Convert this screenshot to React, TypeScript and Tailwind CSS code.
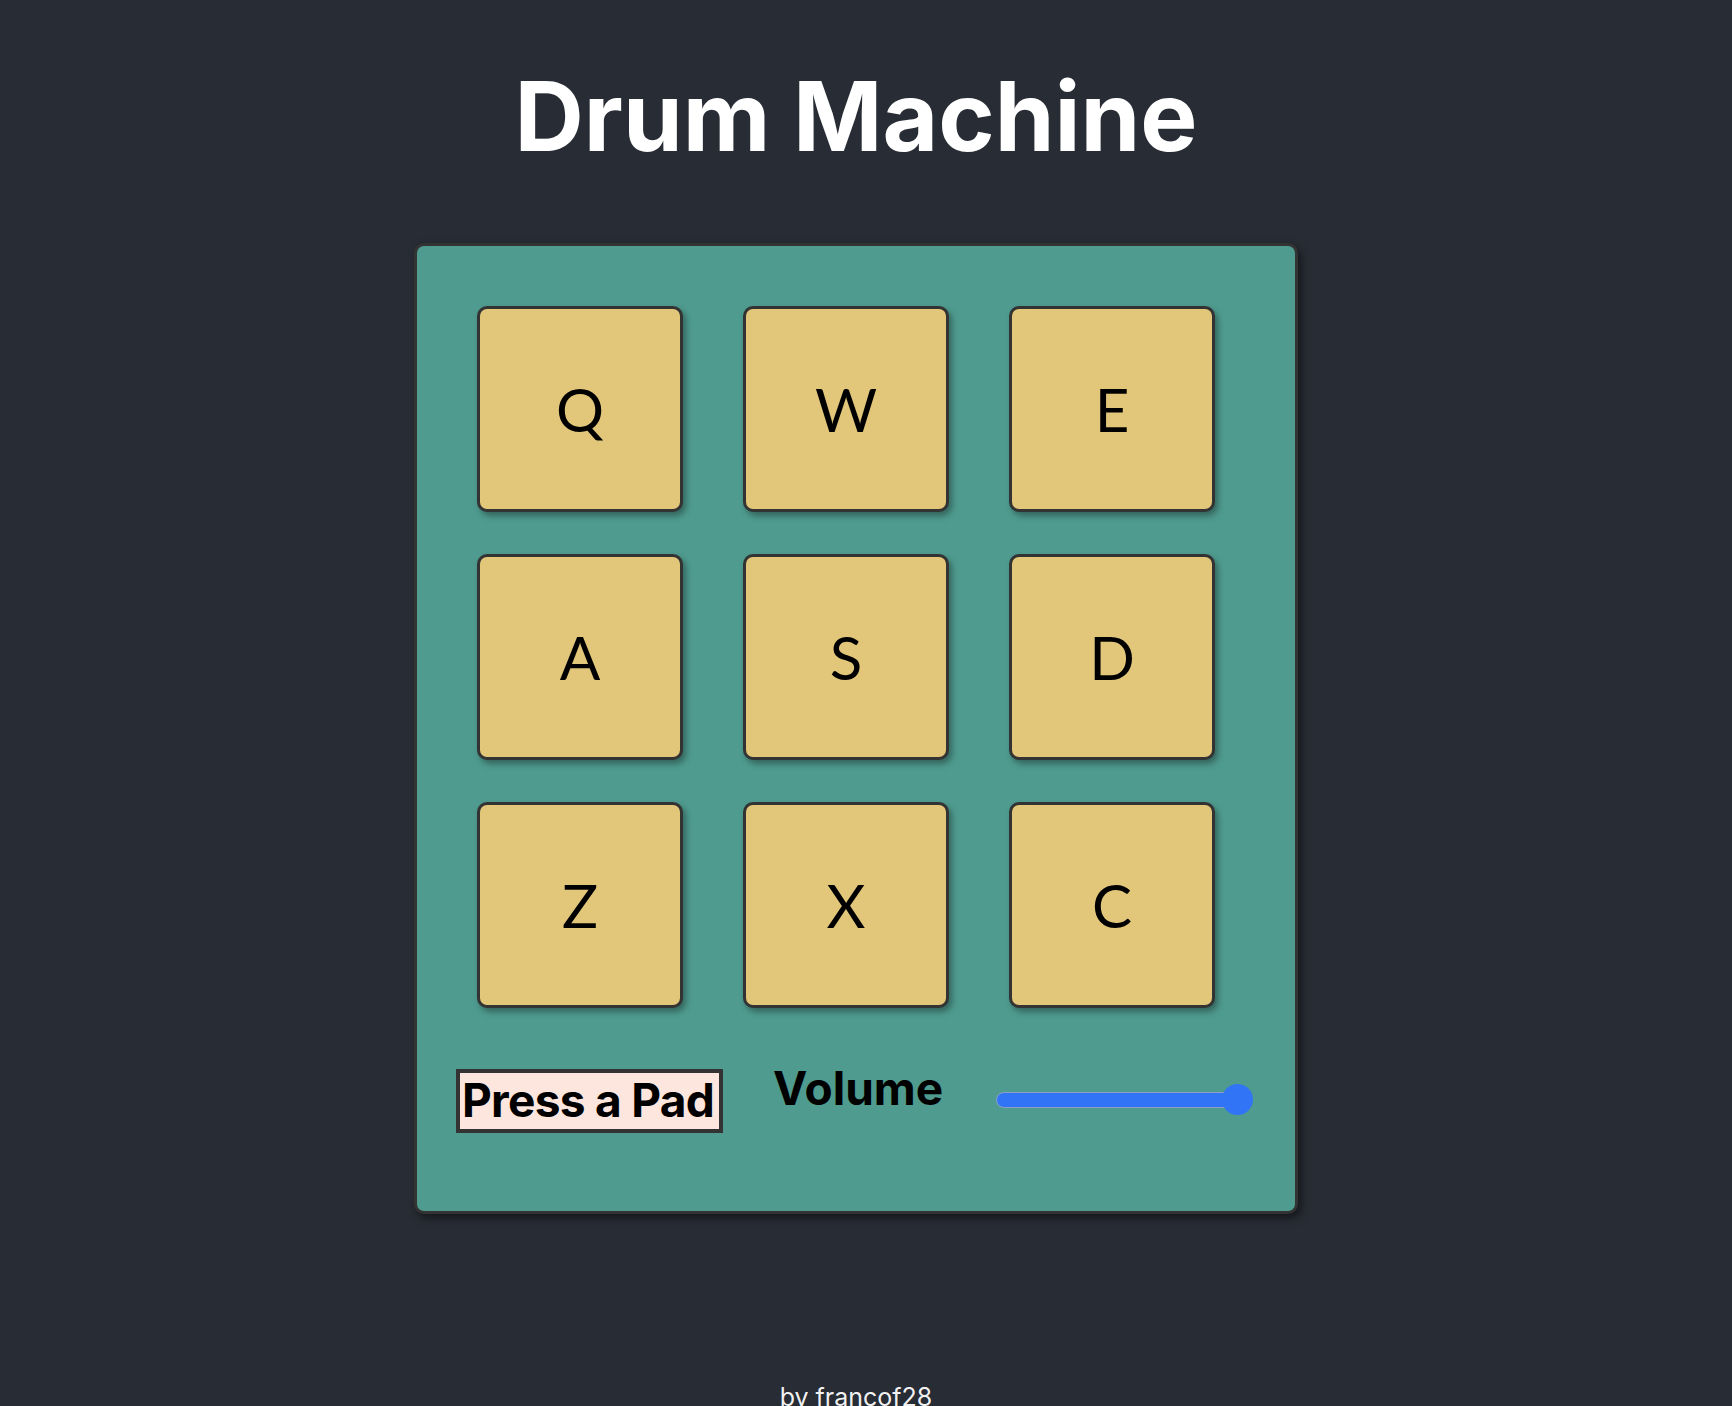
const pads = ['Q', 'W', 'E', 'A', 'S', 'D', 'Z', 'X', 'C']

function Pad({ k }: { k: string }) {
  return (
    <div className="w-[206px] h-[206px] flex items-center justify-center rounded-[10px] border-[3px] border-[#333333] bg-[#e2c67a] shadow-[3px_4px_6px_rgba(0,0,0,0.35)] text-[60px] text-black font-['Lato',sans-serif] leading-none">
      {k}
    </div>
  )
}

export default function App() {
  return (
    <div className="min-h-screen bg-[#282c34] flex flex-col items-center pt-[68px] pr-[20px] font-['Inter',sans-serif]">
      <h1 className="text-8xl leading-none font-bold tracking-normal text-white">Drum Machine</h1>

      <div className="mt-[79px] w-[884px] h-[971px] rounded-[10px] border-[3px] border-[#333333] bg-[#4f9b8f] shadow-[3px_4px_8px_rgba(0,0,0,0.5)] pt-[60px] px-[60px]">
        <div className="grid grid-cols-[repeat(3,206px)] gap-x-[60px] gap-y-[42px]">
          {pads.map(k => <Pad key={k} k={k} />)}
        </div>

        <div className="mt-[61px] -ml-[21px] -mr-[40px] flex items-start">
          <div className="shrink-0 w-[267px] h-[64px] border-[4px] border-[#333333] bg-[#fce6dd] pl-[2px] pt-[5px] text-[46px] leading-[44px] tracking-[-0.015em] font-bold text-black whitespace-nowrap">
            Press a Pad
          </div>
          <div className="shrink-0 ml-[50px] -mt-[6px] text-[46px] leading-none font-bold text-black py-[2px]">Volume</div>
          <div className="shrink-0 ml-[53px] mt-[23px] relative w-[257px] h-[16px]">
            <div className="w-[242px] h-[16px] rounded-full bg-[#3274f6] border border-[#8aa0c8]" />
            <div className="absolute right-0 top-[-8px] w-[31px] h-[31px] rounded-full bg-[#3274f6]" />
          </div>
        </div>
      </div>

      <p className="mt-[165px] text-[25px] text-white/95 leading-normal pb-[20px]">by francof28</p>
    </div>
  )
}
